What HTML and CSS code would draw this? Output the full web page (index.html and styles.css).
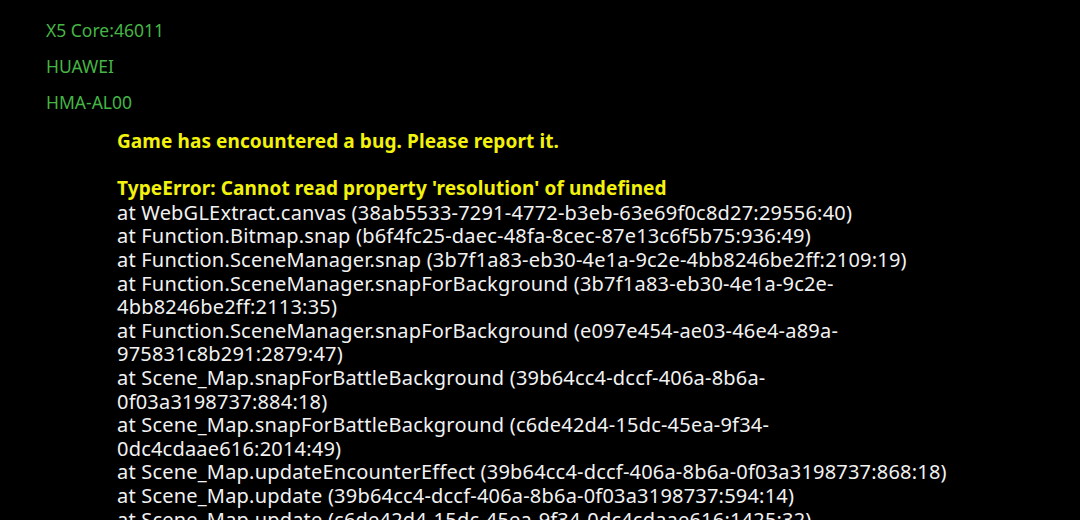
FILE: index.html
```html
<!DOCTYPE html>
<html>
<head>
<meta charset="utf-8">
<link rel="stylesheet" href="styles.css">
</head>
<body>
<div class="info">
  <div class="info-line">X5 Core:46011</div>
  <div class="info-line">HUAWEI</div>
  <div class="info-line">HMA-AL00</div>
</div>
<div class="error">
  <div class="headline">Game has encountered a bug. Please report it.</div>
  <div class="blank"></div>
  <div class="headline">TypeError: Cannot read property 'resolution' of undefined</div>
  <div class="frame">at WebGLExtract.canvas (38ab5533-7291-4772-b3eb-63e69f0c8d27:29556:40)</div>
  <div class="frame">at Function.Bitmap.snap (b6f4fc25-daec-48fa-8cec-87e13c6f5b75:936:49)</div>
  <div class="frame">at Function.SceneManager.snap (3b7f1a83-eb30-4e1a-9c2e-4bb8246be2ff:2109:19)</div>
  <div class="frame">at Function.SceneManager.snapForBackground (3b7f1a83-eb30-4e1a-9c2e-4bb8246be2ff:2113:35)</div>
  <div class="frame">at Function.SceneManager.snapForBackground (e097e454-ae03-46e4-a89a-975831c8b291:2879:47)</div>
  <div class="frame">at Scene_Map.snapForBattleBackground (39b64cc4-dccf-406a-8b6a-0f03a3198737:884:18)</div>
  <div class="frame">at Scene_Map.snapForBattleBackground (c6de42d4-15dc-45ea-9f34-0dc4cdaae616:2014:49)</div>
  <div class="frame">at Scene_Map.updateEncounterEffect (39b64cc4-dccf-406a-8b6a-0f03a3198737:868:18)</div>
  <div class="frame">at Scene_Map.update (39b64cc4-dccf-406a-8b6a-0f03a3198737:594:14)</div>
  <div class="frame">at Scene_Map.update (c6de42d4-15dc-45ea-9f34-0dc4cdaae616:1425:32)</div>
</div>
</body>
</html>
```
FILE: styles.css
```css
html, body {
  margin: 0;
  padding: 0;
  background: #000;
  height: 100%;
  overflow: hidden;
}
body {
  font-family: "Noto Sans", "Open Sans", sans-serif;
}
.info {
  padding: 12px 0 0 46px;
  color: #45b545;
  font-size: 17.5px;
  line-height: 36px;
}
.info-line {
  white-space: nowrap;
}
.error {
  margin: 10px 0 0 117px;
  width: 836px;
  font-size: 20px;
  line-height: 23.6px;
}
.headline {
  color: #f2f20c;
  font-weight: 700;
  font-size: 19px;
  letter-spacing: 0.1px;
}
.blank {
  height: 23.6px;
}
.frame {
  color: #f2f2f2;
  letter-spacing: 0.2px;
}
```
